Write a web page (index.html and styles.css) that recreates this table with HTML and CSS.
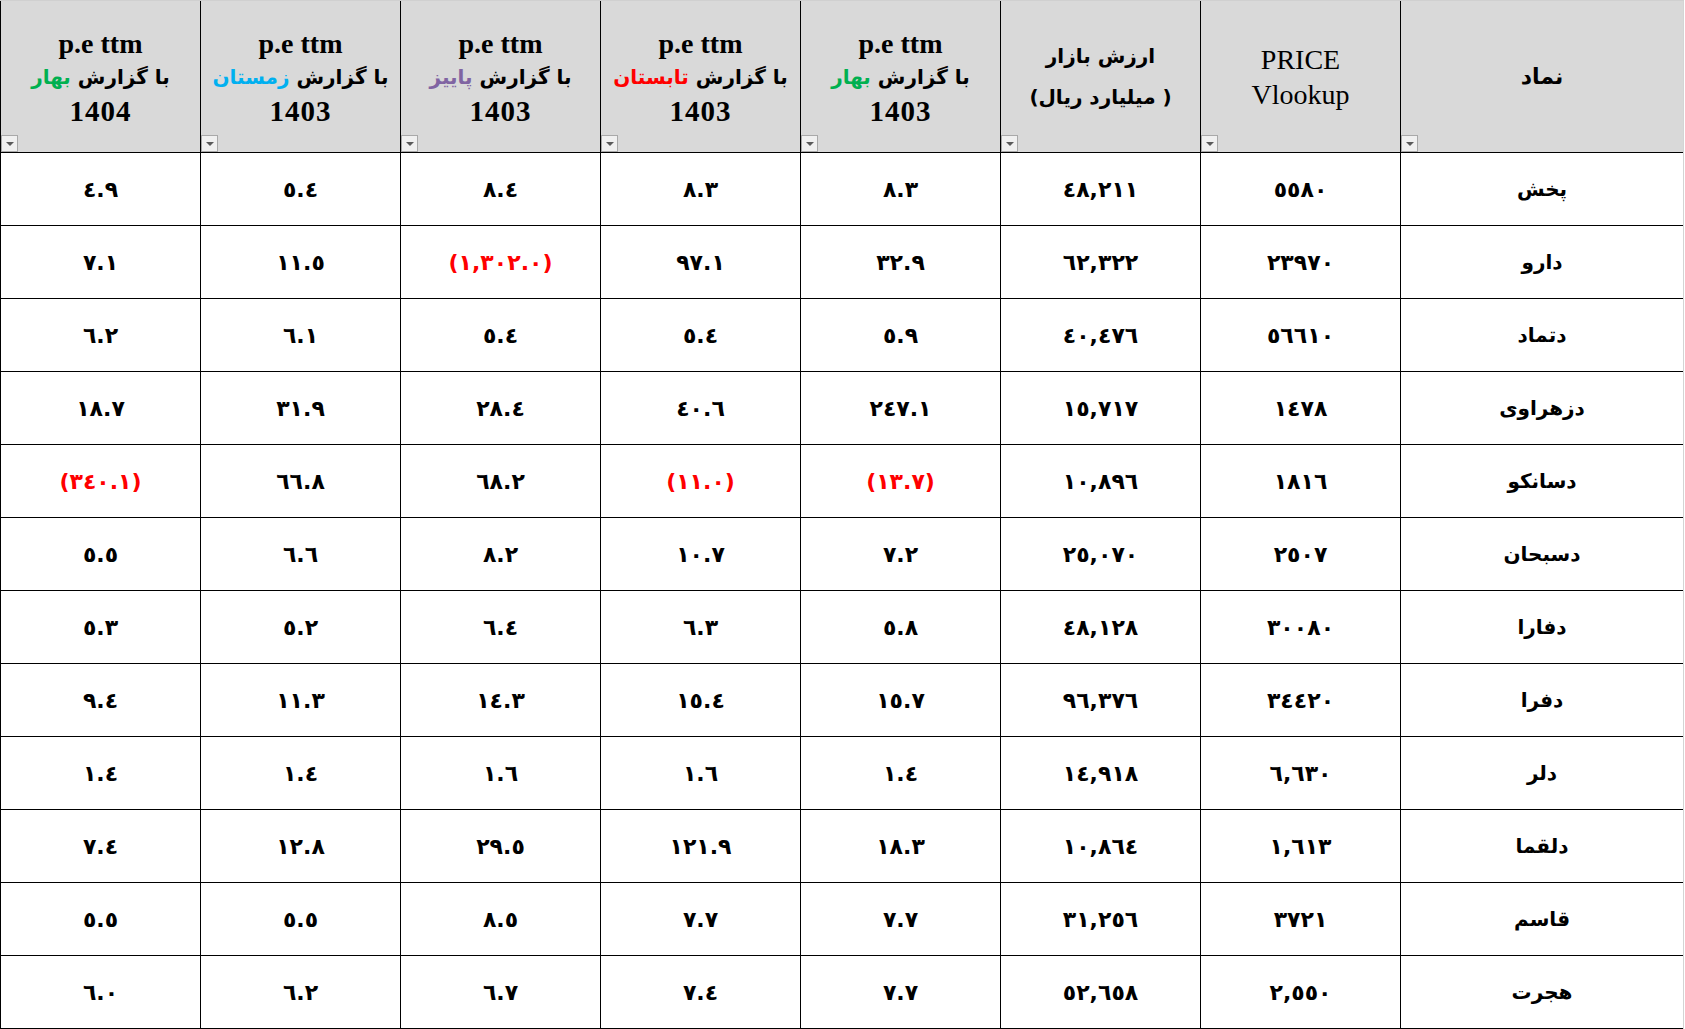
FILE: index.html
```html
<!DOCTYPE html>
<html lang="fa">
<head>
<meta charset="utf-8">
<title>p.e ttm</title>
<link rel="stylesheet" href="styles.css">
</head>
<body>
<div class="sheet">
  <div class="grid">
    <div class="hc"><div class="ht ar-big">نماد</div><span class="dd"></span></div>
    <div class="hc"><div class="ht lat"><span>PRICE</span><span>Vlookup</span></div><span class="dd"></span></div>
    <div class="hc"><div class="ht ar2"><span>ارزش بازار</span><span>( میلیارد ریال)</span></div><span class="dd"></span></div>
    <div class="hc"><div class="ht pe"><span class="en">p.e ttm</span><span class="fa">با گزارش <span class="c-green">بهار</span></span><span class="yr">1403</span></div><span class="dd"></span></div>
    <div class="hc"><div class="ht pe"><span class="en">p.e ttm</span><span class="fa">با گزارش <span class="c-red">تابستان</span></span><span class="yr">1403</span></div><span class="dd"></span></div>
    <div class="hc"><div class="ht pe"><span class="en">p.e ttm</span><span class="fa">با گزارش <span class="c-purple">پاییز</span></span><span class="yr">1403</span></div><span class="dd"></span></div>
    <div class="hc"><div class="ht pe"><span class="en">p.e ttm</span><span class="fa">با گزارش <span class="c-blue">زمستان</span></span><span class="yr">1403</span></div><span class="dd"></span></div>
    <div class="hc"><div class="ht pe"><span class="en">p.e ttm</span><span class="fa">با گزارش <span class="c-green">بهار</span></span><span class="yr">1404</span></div><span class="dd"></span></div>

    <div class="c name">پخش</div><div class="c">٥٥٨٠</div><div class="c">٤٨,٢١١</div><div class="c">٨.٣</div><div class="c">٨.٣</div><div class="c">٨.٤</div><div class="c">٥.٤</div><div class="c">٤.٩</div>
    <div class="c name">دارو</div><div class="c">٢٣٩٧٠</div><div class="c">٦٢,٣٢٢</div><div class="c">٣٢.٩</div><div class="c">٩٧.١</div><div class="c neg">(١,٣٠٢.٠)</div><div class="c">١١.٥</div><div class="c">٧.١</div>
    <div class="c name">دتماد</div><div class="c">٥٦٦١٠</div><div class="c">٤٠,٤٧٦</div><div class="c">٥.٩</div><div class="c">٥.٤</div><div class="c">٥.٤</div><div class="c">٦.١</div><div class="c">٦.٢</div>
    <div class="c name">دزهراوی</div><div class="c">١٤٧٨</div><div class="c">١٥,٧١٧</div><div class="c">٢٤٧.١</div><div class="c">٤٠.٦</div><div class="c">٢٨.٤</div><div class="c">٣١.٩</div><div class="c">١٨.٧</div>
    <div class="c name">دسانکو</div><div class="c">١٨١٦</div><div class="c">١٠,٨٩٦</div><div class="c neg">(١٣.٧)</div><div class="c neg">(١١.٠)</div><div class="c">٦٨.٢</div><div class="c">٦٦.٨</div><div class="c neg">(٣٤٠.١)</div>
    <div class="c name">دسبحان</div><div class="c">٢٥٠٧</div><div class="c">٢٥,٠٧٠</div><div class="c">٧.٢</div><div class="c">١٠.٧</div><div class="c">٨.٢</div><div class="c">٦.٦</div><div class="c">٥.٥</div>
    <div class="c name">دفارا</div><div class="c">٣٠٠٨٠</div><div class="c">٤٨,١٢٨</div><div class="c">٥.٨</div><div class="c">٦.٣</div><div class="c">٦.٤</div><div class="c">٥.٢</div><div class="c">٥.٣</div>
    <div class="c name">دفرا</div><div class="c">٣٤٤٢٠</div><div class="c">٩٦,٣٧٦</div><div class="c">١٥.٧</div><div class="c">١٥.٤</div><div class="c">١٤.٣</div><div class="c">١١.٣</div><div class="c">٩.٤</div>
    <div class="c name">دلر</div><div class="c">٦,٦٣٠</div><div class="c">١٤,٩١٨</div><div class="c">١.٤</div><div class="c">١.٦</div><div class="c">١.٦</div><div class="c">١.٤</div><div class="c">١.٤</div>
    <div class="c name">دلقما</div><div class="c">١,٦١٣</div><div class="c">١٠,٨٦٤</div><div class="c">١٨.٣</div><div class="c">١٢١.٩</div><div class="c">٢٩.٥</div><div class="c">١٢.٨</div><div class="c">٧.٤</div>
    <div class="c name">قاسم</div><div class="c">٣٧٢١</div><div class="c">٣١,٢٥٦</div><div class="c">٧.٧</div><div class="c">٧.٧</div><div class="c">٨.٥</div><div class="c">٥.٥</div><div class="c">٥.٥</div>
    <div class="c name">هجرت</div><div class="c">٢,٥٥٠</div><div class="c">٥٢,٦٥٨</div><div class="c">٧.٧</div><div class="c">٧.٤</div><div class="c">٦.٧</div><div class="c">٦.٢</div><div class="c">٦.٠</div>
  </div>
</div>
</body>
</html>
```

FILE: styles.css
```css
html, body {
  margin: 0;
  padding: 0;
  background: #ffffff;
  overflow: hidden;
}

.sheet {
  width: 1684px;
  border-top: 1px solid #d0d0d0;
}

.grid {
  display: grid;
  direction: rtl;
  grid-template-columns: 283px repeat(7, 200px);
  grid-template-rows: 152px repeat(12, 73px);
  border-right: 1px solid #d4d4d4;
  width: 1683px;
}

.hc {
  position: relative;
  box-sizing: border-box;
  background: #d9d9d9;
  border-left: 1px solid #000;
  border-bottom: 1px solid #000;
  display: flex;
  align-items: center;
  justify-content: center;
  color: #000;
}

.ht {
  display: flex;
  flex-direction: column;
  align-items: center;
  text-align: center;
}

.ht.pe {
  padding-top: 2px;
}

.ht.pe .en {
  font-family: "Liberation Serif", serif;
  font-weight: bold;
  font-size: 28px;
  line-height: 33px;
  direction: ltr;
}

.ht.pe .fa {
  font-family: "DejaVu Sans", sans-serif;
  font-weight: bold;
  font-size: 20px;
  line-height: 35px;
}

.ht.pe .yr {
  font-family: "Liberation Serif", serif;
  font-weight: bold;
  font-size: 29px;
  line-height: 33px;
  letter-spacing: 1px;
  direction: ltr;
}

.ht.lat {
  font-family: "Liberation Serif", serif;
  font-size: 28px;
  line-height: 35px;
  direction: ltr;
}

.ht.ar2 {
  font-family: "DejaVu Sans", sans-serif;
  font-weight: bold;
  font-size: 20px;
  line-height: 41px;
}

.ht.ar-big {
  font-family: "DejaVu Sans", sans-serif;
  font-weight: bold;
  font-size: 22px;
}

.c-green { color: #00b050; }
.c-red { color: #ff0000; }
.c-purple { color: #8064a2; }
.c-blue { color: #00b0f0; }

.dd {
  position: absolute;
  left: 0;
  bottom: 0;
  width: 17px;
  height: 17px;
  box-sizing: border-box;
  border: 1px solid #a9a9a9;
  background: #f0f0f0;
}

.dd::after {
  content: "";
  position: absolute;
  left: 4px;
  top: 6px;
  border-left: 4px solid transparent;
  border-right: 4px solid transparent;
  border-top: 4px solid #5a5a5a;
}

.c {
  box-sizing: border-box;
  border-left: 1px solid #000;
  border-bottom: 1px solid #000;
  display: flex;
  align-items: center;
  justify-content: center;
  font-family: "DejaVu Sans", sans-serif;
  font-weight: bold;
  font-size: 22px;
  color: #000;
}

.c.name {
  font-size: 20px;
}

.c.neg {
  color: #ff0000;
}
```
